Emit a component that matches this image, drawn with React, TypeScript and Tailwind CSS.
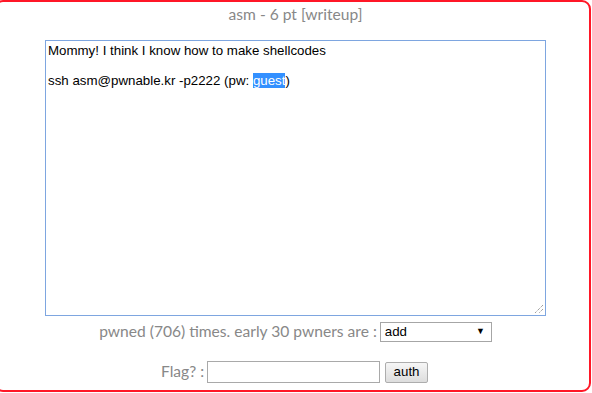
export default function App() {
  return (
    <div className="w-[592px] h-[393px] overflow-hidden bg-white">
      <div className="-ml-[6px] w-[597px] h-[392px] border-2 border-[#ff1727] rounded-[9px] flex flex-col items-center font-['Lato',sans-serif] text-[#888888]">
        <div className="mt-[1px] h-[22px] leading-[22px] text-[15.6px] pl-[6px]">asm - 6 pt [writeup]</div>

        <div className="mt-[15px] ml-[6px] relative w-[501px] h-[276px] border border-[#7ea6e0] bg-white px-[2px] pt-[2px] font-['Liberation_Sans',Arial,sans-serif] text-[13.3px] leading-[15px] text-black">
          <div>Mommy! I think I know how to make shellcodes</div>
          <div className="h-[15px]"></div>
          <div>
            ssh asm@pwnable.kr -p2222 (pw: <span className="bg-[#3390ff] text-white">guest</span>)
          </div>
          <svg className="absolute right-[1px] bottom-[1px]" width="10" height="10" viewBox="0 0 10 10">
            <path d="M9 1 L1 9 M9 5 L5 9" stroke="#777" strokeWidth="1" strokeDasharray="1 1" />
          </svg>
        </div>

        <div className="mt-[4px] ml-[6px] flex items-center gap-[3px] text-[15.6px]">
          <span>pwned (706) times. early 30 pwners are :</span>
          <div className="w-[112px] h-[20px] border border-[#a6a6a6] flex items-center justify-between pl-[4px] pr-[6px] font-['Liberation_Sans',Arial,sans-serif] text-[13.3px] text-black">
            <span>add</span>
            <span className="text-[9px]">▼</span>
          </div>
        </div>

        <div className="mt-[17px] ml-[4px] flex items-center gap-[3px] text-[15.6px]">
          <span>Flag? :</span>
          <div className="w-[173px] h-[22px] border border-[#a9a9a9] bg-white"></div>
          <button className="ml-[2px] w-[43px] h-[21px] border border-[#adadad] rounded-[2px] bg-gradient-to-b from-[#f6f6f6] to-[#dddddd] font-['Liberation_Sans',Arial,sans-serif] text-[13.3px] text-black leading-none">
            auth
          </button>
        </div>
      </div>
    </div>
  );
}
